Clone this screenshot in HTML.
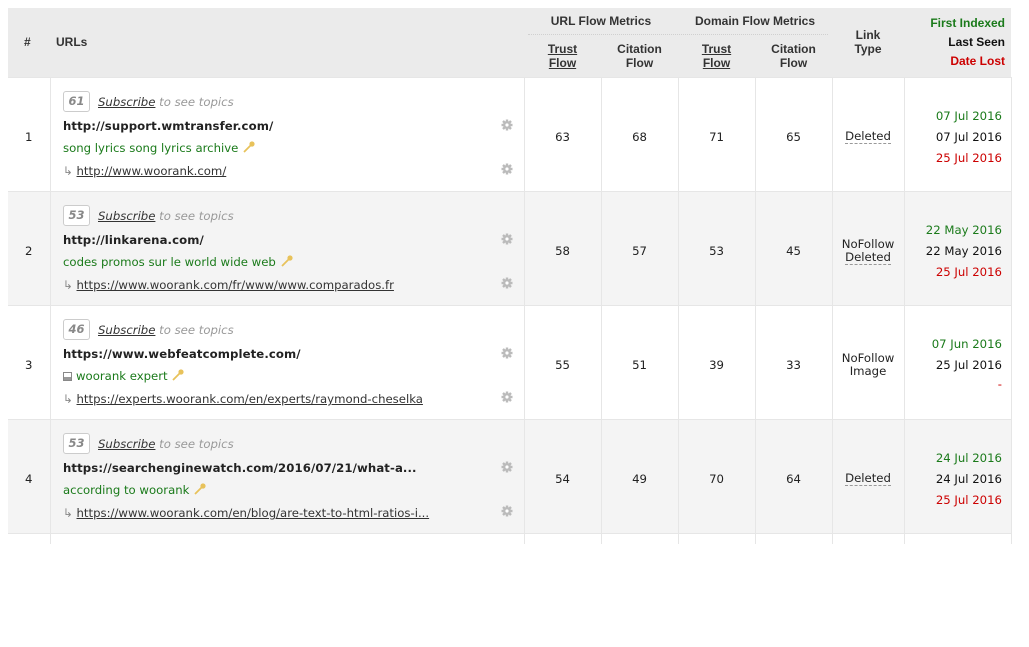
<!DOCTYPE html>
<html><head><meta charset="utf-8"><style>
*{margin:0;padding:0;box-sizing:border-box}
body{width:1029px;height:544px;background:#fff;position:relative;overflow:hidden;font-family:"DejaVu Sans","Liberation Sans",sans-serif;font-size:11.7px;color:#222}
.a{position:absolute;white-space:nowrap}
.h{font-family:"Liberation Sans",sans-serif;font-weight:bold;font-size:12px;color:#333;text-align:center;line-height:14px}
.vl{position:absolute;width:1px;background:#e6e6e6}
.row{position:absolute;left:8px;width:1003px;height:114px;border-top:1px solid #e6e6e6}
.badge{position:absolute;left:55px;top:13px;width:27px;height:21px;border:1px solid #ccc;border-radius:3px;background:#fff;color:#888;font-weight:bold;font-style:italic;font-size:11.5px;text-align:center;line-height:19px}
.sub{position:absolute;left:90px;top:17px;font-style:italic;color:#999}
.sub u{color:#333}
.url{position:absolute;left:55px;top:41px;font-weight:bold;color:#222;letter-spacing:0.1px}
.desc{position:absolute;left:55px;top:63px;color:#1a7a1a}
.lnk{position:absolute;left:55px;top:86px;color:#888}
.lnk u{color:#333}
.num{position:absolute;top:52px;text-align:center;width:77px;color:#222}
.lt{position:absolute;left:824px;width:72px;text-align:center;color:#222;line-height:13px}
.dot{border-bottom:1px dashed #999}
.dt{position:absolute;right:9px;text-align:right}
.g{color:#1a7a1a}.r{color:#cc0000}
.gear{position:absolute;left:493px}
</style></head><body>
<svg width="0" height="0" style="position:absolute"><defs>
<g id="gr"><circle cx="6" cy="6" r="4" fill="#bbb"/><g stroke="#bbb" stroke-width="2.4"><line x1="6" y1="0.5" x2="6" y2="11.5"/><line x1="0.5" y1="6" x2="11.5" y2="6"/><line x1="2" y1="2" x2="10" y2="10"/><line x1="10" y1="2" x2="2" y2="10"/></g><circle cx="6" cy="6" r="1.6" fill="#fff"/></g>
<g id="ky"><circle cx="10" cy="3" r="2.6" fill="#e8c25a"/><line x1="8.5" y1="4.5" x2="2" y2="11" stroke="#e8c25a" stroke-width="1.8"/></g>
</defs></svg>

<div class="a" style="left:8px;top:8px;width:1003px;height:69px;background:#ebebeb"></div>
<div class="a h" style="left:24px;top:35px">#</div>
<div class="a h" style="left:56px;top:35px">URLs</div>
<div class="a h" style="left:524px;top:14px;width:154px">URL Flow Metrics</div>
<div class="a h" style="left:678px;top:14px;width:154px">Domain Flow Metrics</div>
<div class="a" style="left:528px;top:34px;width:300px;border-top:1px dotted #d0d0d0"></div>
<div class="a h" style="left:524px;top:42px;width:77px"><span style="text-decoration:underline">Trust</span><br><span style="text-decoration:underline">Flow</span></div>
<div class="a h" style="left:601px;top:42px;width:77px">Citation<br>Flow</div>
<div class="a h" style="left:678px;top:42px;width:77px"><span style="text-decoration:underline">Trust</span><br><span style="text-decoration:underline">Flow</span></div>
<div class="a h" style="left:755px;top:42px;width:77px">Citation<br>Flow</div>
<div class="a h" style="left:832px;top:28px;width:72px">Link<br>Type</div>
<div class="a h" style="right:24px;top:16px;color:#1a7a1a;text-align:right">First Indexed</div>
<div class="a h" style="right:24px;top:35px;color:#111;text-align:right">Last Seen</div>
<div class="a h" style="right:24px;top:54px;color:#cc0000;text-align:right">Date Lost</div>

<div class="row" style="top:77px;background:#fff">
<div class="a" style="left:17px;top:52px">1</div>
<div class="badge">61</div><div class="sub"><u>Subscribe</u> to see topics</div>
<div class="url">http://support.wmtransfer.com/</div>
<div class="desc">song lyrics song lyrics archive <svg width="13" height="12" style="vertical-align:top"><use href="#ky"/></svg></div>
<div class="lnk">↳ <u>http://www.woorank.com/</u></div>
<svg class="gear" style="top:41px" width="12" height="12"><use href="#gr"/></svg>
<svg class="gear" style="top:85px" width="12" height="12"><use href="#gr"/></svg>
<div class="num" style="left:516px">63</div><div class="num" style="left:593px">68</div><div class="num" style="left:670px">71</div><div class="num" style="left:747px">65</div>
<div class="lt" style="top:52px"><span class="dot">Deleted</span></div>
<div class="dt g" style="top:31px">07 Jul 2016</div><div class="dt" style="top:52px;color:#111">07 Jul 2016</div><div class="dt r" style="top:73px">25 Jul 2016</div>
</div>

<div class="row" style="top:191px;background:#f4f4f4">
<div class="a" style="left:17px;top:52px">2</div>
<div class="badge">53</div><div class="sub"><u>Subscribe</u> to see topics</div>
<div class="url">http://linkarena.com/</div>
<div class="desc">codes promos sur le world wide web <svg width="13" height="12" style="vertical-align:top"><use href="#ky"/></svg></div>
<div class="lnk">↳ <u>https://www.woorank.com/fr/www/www.comparados.fr</u></div>
<svg class="gear" style="top:41px" width="12" height="12"><use href="#gr"/></svg>
<svg class="gear" style="top:85px" width="12" height="12"><use href="#gr"/></svg>
<div class="num" style="left:516px">58</div><div class="num" style="left:593px">57</div><div class="num" style="left:670px">53</div><div class="num" style="left:747px">45</div>
<div class="lt" style="top:46px">NoFollow<br><span class="dot">Deleted</span></div>
<div class="dt g" style="top:31px">22 May 2016</div><div class="dt" style="top:52px;color:#111">22 May 2016</div><div class="dt r" style="top:73px">25 Jul 2016</div>
</div>

<div class="row" style="top:305px;background:#fff">
<div class="a" style="left:17px;top:52px">3</div>
<div class="badge">46</div><div class="sub"><u>Subscribe</u> to see topics</div>
<div class="url">https://www.webfeatcomplete.com/</div>
<div class="desc"><span style="display:inline-block;width:9px;height:9px;border:1px solid #888;vertical-align:-1px;margin-right:4px;background:linear-gradient(#fff 55%,#999 55%)"></span>woorank expert <svg width="13" height="12" style="vertical-align:top"><use href="#ky"/></svg></div>
<div class="lnk">↳ <u>https://experts.woorank.com/en/experts/raymond-cheselka</u></div>
<svg class="gear" style="top:41px" width="12" height="12"><use href="#gr"/></svg>
<svg class="gear" style="top:85px" width="12" height="12"><use href="#gr"/></svg>
<div class="num" style="left:516px">55</div><div class="num" style="left:593px">51</div><div class="num" style="left:670px">39</div><div class="num" style="left:747px">33</div>
<div class="lt" style="top:46px">NoFollow<br>Image</div>
<div class="dt g" style="top:31px">07 Jun 2016</div><div class="dt" style="top:52px;color:#111">25 Jul 2016</div><div class="dt r" style="top:71px">-</div>
</div>

<div class="row" style="top:419px;background:#f4f4f4">
<div class="a" style="left:17px;top:52px">4</div>
<div class="badge">53</div><div class="sub"><u>Subscribe</u> to see topics</div>
<div class="url">https://searchenginewatch.com/2016/07/21/what-a...</div>
<div class="desc">according to woorank <svg width="13" height="12" style="vertical-align:top"><use href="#ky"/></svg></div>
<div class="lnk">↳ <u>https://www.woorank.com/en/blog/are-text-to-html-ratios-i...</u></div>
<svg class="gear" style="top:41px" width="12" height="12"><use href="#gr"/></svg>
<svg class="gear" style="top:85px" width="12" height="12"><use href="#gr"/></svg>
<div class="num" style="left:516px">54</div><div class="num" style="left:593px">49</div><div class="num" style="left:670px">70</div><div class="num" style="left:747px">64</div>
<div class="lt" style="top:52px"><span class="dot">Deleted</span></div>
<div class="dt g" style="top:31px">24 Jul 2016</div><div class="dt" style="top:52px;color:#111">24 Jul 2016</div><div class="dt r" style="top:73px">25 Jul 2016</div>
</div>

<div class="row" style="top:533px;background:#fff"></div>

<div class="vl" style="left:50px;top:77px;height:467px"></div>
<div class="vl" style="left:524px;top:77px;height:467px"></div>
<div class="vl" style="left:601px;top:77px;height:467px"></div>
<div class="vl" style="left:678px;top:77px;height:467px"></div>
<div class="vl" style="left:755px;top:77px;height:467px"></div>
<div class="vl" style="left:832px;top:77px;height:467px"></div>
<div class="vl" style="left:904px;top:77px;height:467px"></div>
<div class="vl" style="left:1011px;top:77px;height:467px"></div>
</body></html>
